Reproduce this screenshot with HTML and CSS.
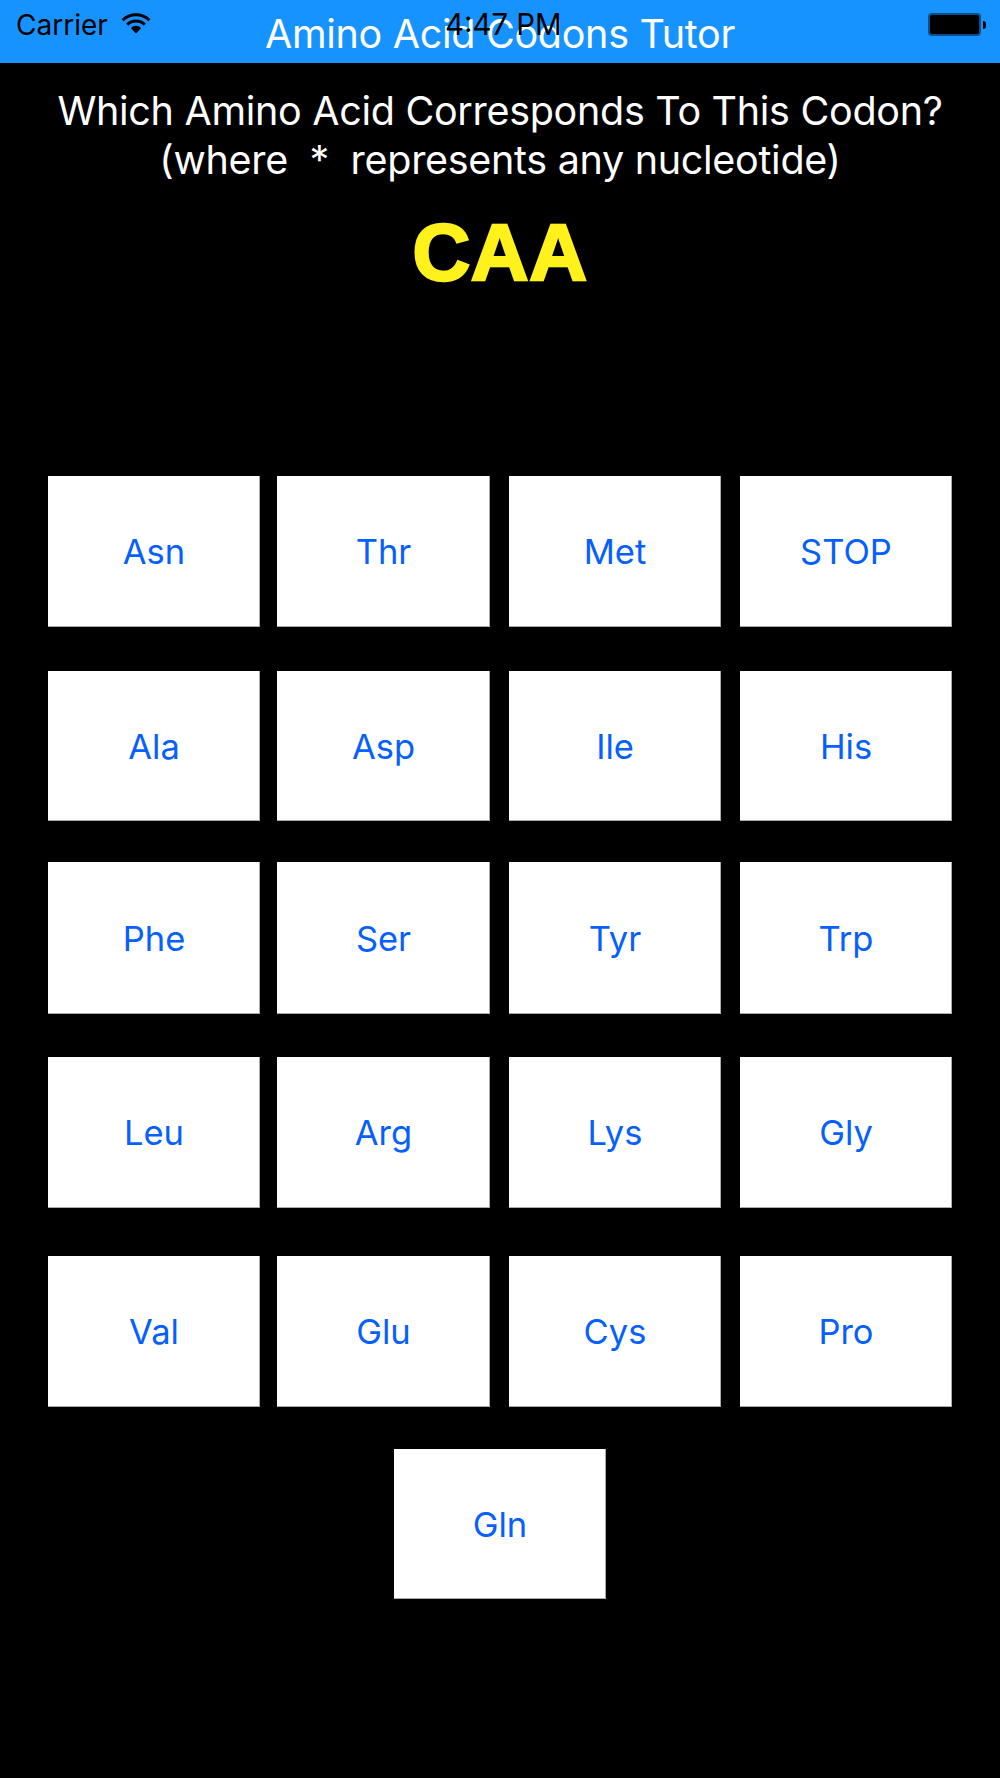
FILE: index.html
```html
<!DOCTYPE html>
<html lang="en">
<head>
    <meta charset="UTF-8" />
    <meta name="viewport" content="width=device-width, initial-scale=1" />
    <title>Amino Acid Codons Tutor</title>
    <link rel="stylesheet" href="styles.css">
</head>
<body>

    <header class="navbar">
        <h1 class="nav-title">Amino Acid Codons Tutor</h1>
        <div class="status-bar">
            <div class="status-left">
                <span>Carrier</span>
                <svg class="wifi" width="30" height="21" viewBox="0 0 30 21">
                    <path d="M15 20.5 L9.8 15 A7.4 7.4 0 0 1 20.2 15 Z" fill="#000"/>
                    <path d="M6.2 11.6 A12.4 12.4 0 0 1 23.8 11.6" fill="none" stroke="#000" stroke-width="3"/>
                    <path d="M1.6 7.2 A19 19 0 0 1 28.4 7.2" fill="none" stroke="#000" stroke-width="3"/>
                </svg>
            </div>
            <span class="status-time">4:47 PM</span>
            <div class="battery">
                <div class="battery-body"></div>
                <div class="battery-cap"></div>
            </div>
        </div>
    </header>

    <main class="content">
        <p class="question">Which Amino Acid Corresponds To This Codon?<br>(where&nbsp; *&nbsp; represents any nucleotide)</p>
        <div class="codon">CAA</div>

        <div class="answers">
            <div class="row row-1">
                <button>Asn</button><button>Thr</button><button>Met</button><button>STOP</button>
            </div>
            <div class="row row-2">
                <button>Ala</button><button>Asp</button><button>Ile</button><button>His</button>
            </div>
            <div class="row row-3">
                <button>Phe</button><button>Ser</button><button>Tyr</button><button>Trp</button>
            </div>
            <div class="row row-4">
                <button>Leu</button><button>Arg</button><button>Lys</button><button>Gly</button>
            </div>
            <div class="row row-5">
                <button>Val</button><button>Glu</button><button>Cys</button><button>Pro</button>
            </div>
            <div class="row row-6">
                <button>Gln</button>
            </div>
        </div>
    </main>

</body>
</html>
```

FILE: styles.css
```css
html, body { margin: 0; padding: 0; background: #000; }
body { width: 1000px; height: 1778px; overflow: hidden; font-family: Inter, "Noto Sans", sans-serif; }

.navbar { position: relative; height: 63px; background: #1793ff; }
.nav-title { margin: 0; padding-top: 12px; font-size: 39.5px; line-height: 44px; font-weight: 400; color: #fff; text-align: center; letter-spacing: -0.3px; }

.status-bar { position: absolute; top: 0; left: 0; right: 0; height: 50px; color: #000; }
.status-left { position: absolute; left: 16px; top: 8px; display: flex; align-items: center; gap: 13px; font-size: 28px; line-height: 34px; }
.wifi { margin-top: -3px; }
.status-time { position: absolute; left: 445px; top: 8px; font-size: 29.4px; line-height: 34px; }
.battery { position: absolute; left: 928px; top: 13px; display: flex; align-items: center; }
.battery-body { width: 49px; height: 19px; background: #000; border: 2px solid #0c4f8c; border-radius: 4px; }
.battery-cap { width: 3px; height: 8px; margin-left: 2px; background: #000; border-radius: 0 3px 3px 0; }

.question { margin: 0; padding-top: 24px; font-size: 39.5px; line-height: 49px; color: #fff; text-align: center; letter-spacing: -0.3px; }
.codon { margin-top: 20px; font-family: "Liberation Sans", Arial, sans-serif; font-weight: bold; font-size: 80px; line-height: 96px; letter-spacing: 0.5px; color: #fff21c; text-align: center; -webkit-text-stroke: 2.5px #fff21c; }

.answers { position: absolute; top: 476px; left: 48px; width: 904px; }
.row { display: flex; }
.row-2 { margin-top: 44px; }
.row-3 { margin-top: 41px; }
.row-4 { margin-top: 43px; }
.row-5 { margin-top: 48px; }
.row-6 { margin-top: 42px; justify-content: center; }

button { width: 212px; height: 151px; padding: 0; background: #fff; border: none; box-shadow: inset -1px -1px 0 #aaa; color: #0660ff; font-family: Inter, "Noto Sans", sans-serif; font-size: 34.5px; }
.row-2 button, .row-6 button { height: 150px; }
.row-3 button { height: 152px; }
.row button:nth-child(2) { margin-left: 17px; width: 213px; }
.row button:nth-child(3) { margin-left: 19px; }
.row button:nth-child(4) { margin-left: 19px; }
```
